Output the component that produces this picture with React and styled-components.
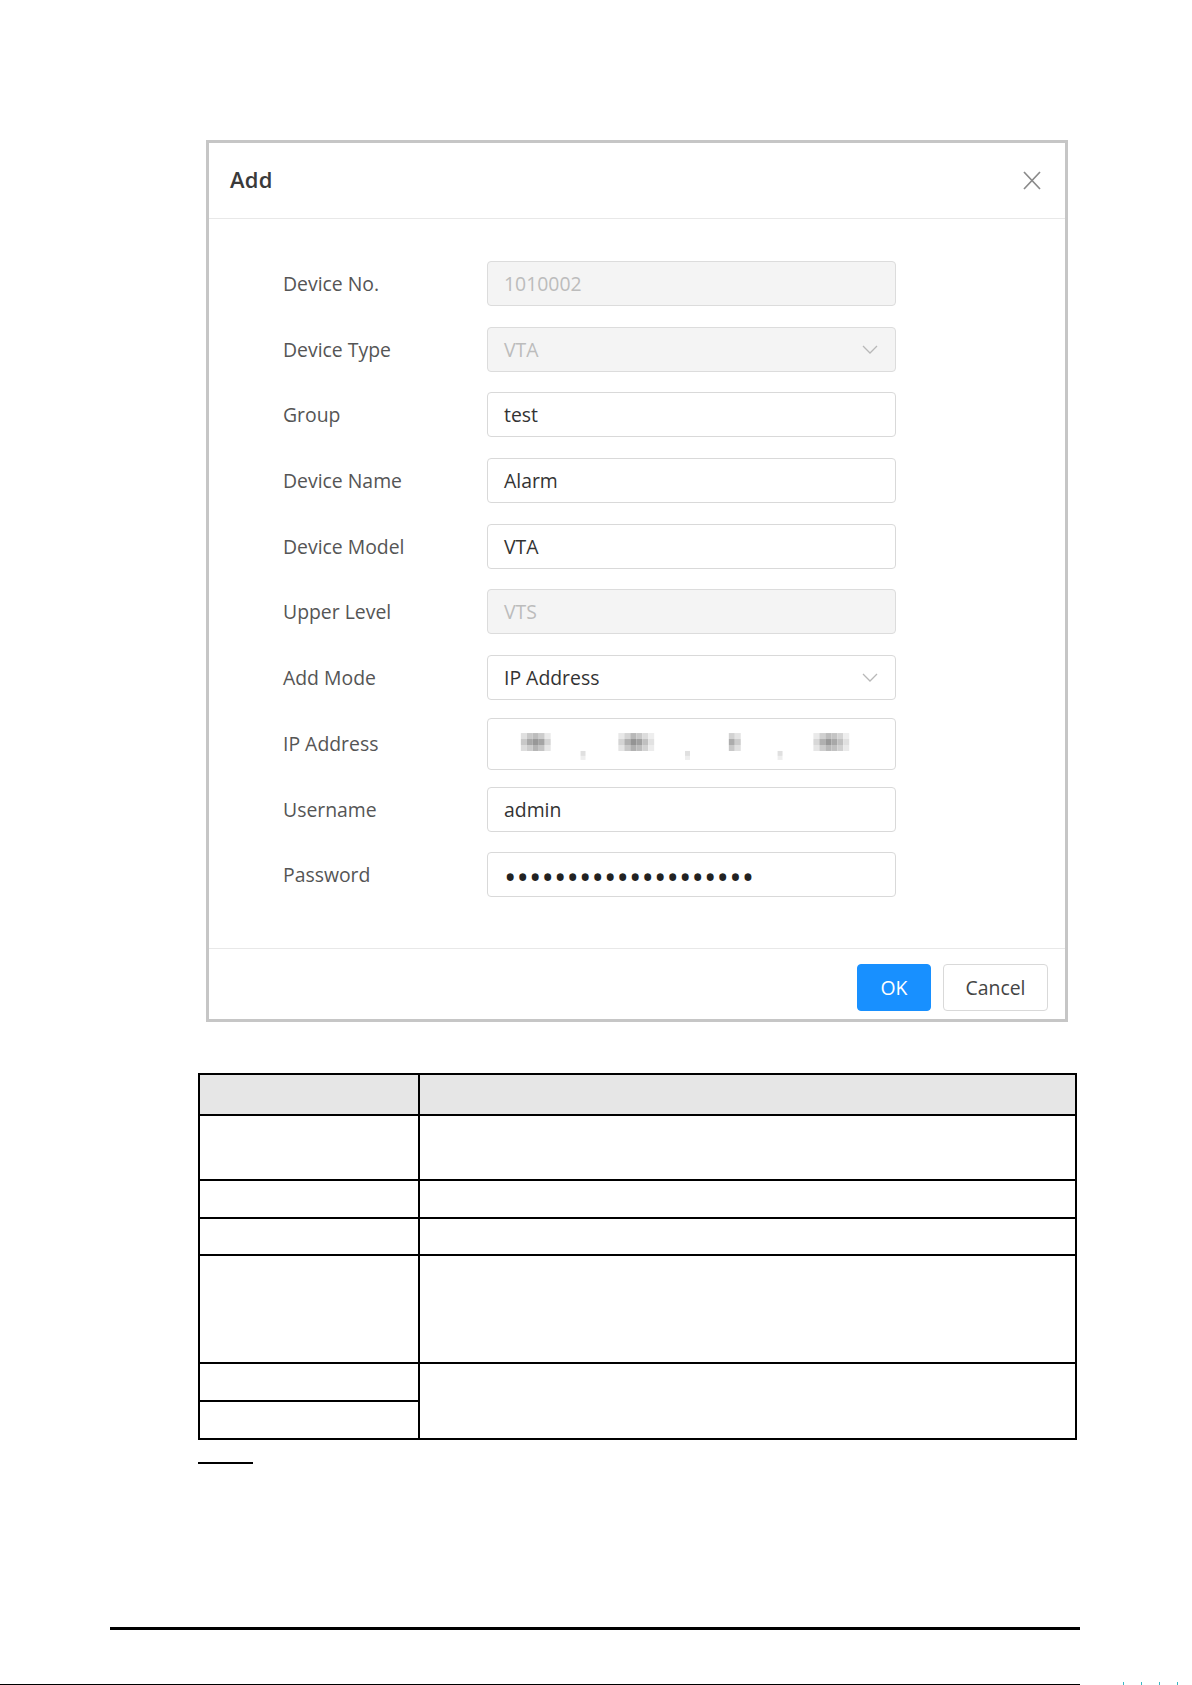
import React from "react";
import styled, { createGlobalStyle } from "styled-components";

const Global = createGlobalStyle`
  html, body { margin: 0; padding: 0; background: #ffffff; }
  body { overflow: hidden; font-family: "Open Sans", "Noto Sans", sans-serif; }
`;

const Page = styled.div`
  width: 1192px;
  height: 1685px;
  padding-top: 140px;
  box-sizing: border-box;
  display: flex;
  flex-direction: column;
  position: relative;
`;

const Dialog = styled.section`
  margin-left: 206px;
  width: 862px;
  box-sizing: border-box;
  border: 3px solid #c6c6c6;
  background: #fff;
  display: flex;
  flex-direction: column;
`;

const Header = styled.header`
  height: 75px;
  border-bottom: 1px solid #e8e8e8;
  display: flex;
  align-items: center;
  justify-content: space-between;
  padding: 0 23px 0 21px;
`;

const Title = styled.h2`
  margin: -3px 0 0;
  font-size: 22px;
  font-weight: 600;
  color: #3a3a3a;
  letter-spacing: 0.2px;
`;

const Close = styled.button`
  border: 0;
  background: none;
  padding: 0;
  width: 20px;
  height: 20px;
  display: flex;
  align-items: center;
  justify-content: center;
  cursor: pointer;
`;

const Body = styled.div`
  padding: 42px 0 50.7px 74px;
  display: grid;
  grid-template-columns: 204px 409px;
  row-gap: 20.7px;
  align-items: center;
`;

const Label = styled.label`
  font-size: 19.4px;
  color: #555;
`;

const Field = styled.div`
  box-sizing: border-box;
  height: ${(p) => (p.$tall ? "52px" : "45px")};
  margin: ${(p) => (p.$tall ? "-3px 0 -4px" : "0")};
  border: 1px solid ${(p) => (p.$disabled ? "#dcdcdc" : "#d9d9d9")};
  border-radius: 4px;
  background: ${(p) => (p.$disabled ? "#f4f4f4" : "#fff")};
  color: ${(p) => (p.$disabled ? "#bcbcbc" : "#333")};
  font-size: 19.4px;
  display: flex;
  align-items: center;
  justify-content: space-between;
  padding: ${(p) => (p.$bare ? "0" : "0 17px 0 16px")};
  position: relative;
  overflow: hidden;
`;

const Dots = styled.span`
  font-size: 33px;
  letter-spacing: 0.1px;
  color: #222;
  line-height: 1;
  margin-top: 3px;
`;

const Footer = styled.footer`
  border-top: 1px solid #e8e8e8;
  padding: 15px 17px 8px;
  display: flex;
  justify-content: flex-end;
  gap: 12px;
`;

const Button = styled.button`
  height: 47px;
  min-width: ${(p) => (p.$primary ? "74px" : "105px")};
  border-radius: 4px;
  border: 1px solid ${(p) => (p.$primary ? "#1890ff" : "#d9d9d9")};
  background: ${(p) => (p.$primary ? "#1890ff" : "#fff")};
  color: ${(p) => (p.$primary ? "#fff" : "#444")};
  font-family: "Open Sans", sans-serif;
  font-size: 19.4px;
  padding: 0 16px;
  cursor: pointer;
`;

const Table = styled.table`
  margin: 51px 0 0 198px;
  width: 879px;
  border-collapse: collapse;
  table-layout: fixed;
`;

const Cell = styled.td`
  border: 2px solid #000;
  padding: 0;
  background: ${(p) => (p.$head ? "#e6e6e6" : "#fff")};
`;

const NoteRule = styled.div`
  margin: 22px 0 0 198px;
  width: 55px;
  height: 2px;
  background: #000;
`;

const PageRule = styled.div`
  margin: 163px 0 0 110px;
  width: 970px;
  height: 3px;
  background: #000;
`;

const EdgeRule = styled.div`
  position: absolute;
  left: 0;
  bottom: 0;
  width: 1080px;
  height: 1px;
  background: #000;
`;

const EdgeMarks = styled.div`
  position: absolute;
  left: 1123px;
  bottom: 0;
  display: flex;
  gap: 17px;
`;

const Mark = styled.span`
  width: 1px;
  height: 3px;
  background: #3bb7c4;
`;

const Chevron = () => (
  <svg width="16" height="9" viewBox="0 0 16 9">
    <polyline points="1,1 8,8 15,1" fill="none" stroke="#b8b8b8" strokeWidth="1.3" />
  </svg>
);

const CloseIcon = () => (
  <svg width="18" height="19" viewBox="0 0 18 19">
    <path d="M1 1 L17 18 M17 1 L1 18" stroke="#8a8a8a" strokeWidth="1.7" fill="none" />
  </svg>
);

// pixelated address mask: each block is a grid of 6px cells in grey shades
const blocks = [
  { x: 33, w: 5, shades: ["e0", "c8", "bc", "cc", "ea", "c8", "a8", "98", "a4", "d4", "dc", "cc", "b4", "c4", "e6"] },
  { x: 131, w: 6, shades: ["e8", "d4", "b8", "c8", "dc", "ee", "d4", "b0", "94", "a0", "c0", "e2", "e4", "c8", "b0", "bc", "d2", "ec"] },
  { x: 242, w: 2, shades: ["d2", "e4", "ac", "cc", "c8", "e0"] },
  { x: 327, w: 6, shades: ["ea", "d0", "bc", "c4", "d4", "ee", "d8", "b0", "98", "a8", "c0", "e0", "e6", "cc", "b8", "c0", "d0", "ea"] },
];
const commas = [93, 198, 291];

const AddressMask = () => (
  <svg width="409" height="52" viewBox="0 0 409 52" style={{ filter: "blur(0.7px)" }}>
    {blocks.map((b) =>
      b.shades.map((s, i) => (
        <rect
          key={`${b.x}-${i}`}
          x={b.x + (i % b.w) * 6}
          y={15 + Math.floor(i / b.w) * 6}
          width="6"
          height="6"
          fill={`#${s}${s}${s}`}
        />
      ))
    )}
    {commas.map((x) => (
      <g key={x}>
        <rect x={x} y={33} width="5" height="5" fill="#e0e0e0" />
        <rect x={x} y={38} width="5" height="4" fill="#eeeeee" />
      </g>
    ))}
  </svg>
);

const rows = [
  { label: "Device No.", value: "1010002", disabled: true },
  { label: "Device Type", value: "VTA", disabled: true, select: true },
  { label: "Group", value: "test" },
  { label: "Device Name", value: "Alarm" },
  { label: "Device Model", value: "VTA" },
  { label: "Upper Level", value: "VTS", disabled: true },
  { label: "Add Mode", value: "IP Address", select: true },
  { label: "IP Address", ip: true },
  { label: "Username", value: "admin" },
  { label: "Password", password: true },
];

const tableRows = [
  { h: 41, head: true },
  { h: 65 },
  { h: 38 },
  { h: 37 },
  { h: 108 },
  { h: 38, span: true },
  { h: 38, spanned: true },
];

export default function App() {
  return (
    <>
      <Global />
      <Page>
        <Dialog>
          <Header>
            <Title>Add</Title>
            <Close aria-label="close">
              <CloseIcon />
            </Close>
          </Header>
          <Body>
            {rows.map((r) => (
              <React.Fragment key={r.label}>
                <Label>{r.label}</Label>
                {r.ip ? (
                  <Field $tall $bare>
                    <AddressMask />
                  </Field>
                ) : (
                  <Field $disabled={r.disabled}>
                    {r.password ? <Dots>{"•".repeat(20)}</Dots> : <span>{r.value}</span>}
                    {r.select && <Chevron />}
                  </Field>
                )}
              </React.Fragment>
            ))}
          </Body>
          <Footer>
            <Button $primary>OK</Button>
            <Button>Cancel</Button>
          </Footer>
        </Dialog>
        <Table>
          <colgroup>
            <col style={{ width: "220px" }} />
            <col />
          </colgroup>
          <tbody>
            {tableRows.map((r, i) => (
              <tr key={i} style={{ height: r.h }}>
                <Cell $head={r.head} />
                {!r.spanned && <Cell $head={r.head} rowSpan={r.span ? 2 : 1} />}
              </tr>
            ))}
          </tbody>
        </Table>
        <NoteRule />
        <PageRule />
        <EdgeRule />
        <EdgeMarks>
          <Mark />
          <Mark />
          <Mark />
          <Mark />
        </EdgeMarks>
      </Page>
    </>
  );
}
